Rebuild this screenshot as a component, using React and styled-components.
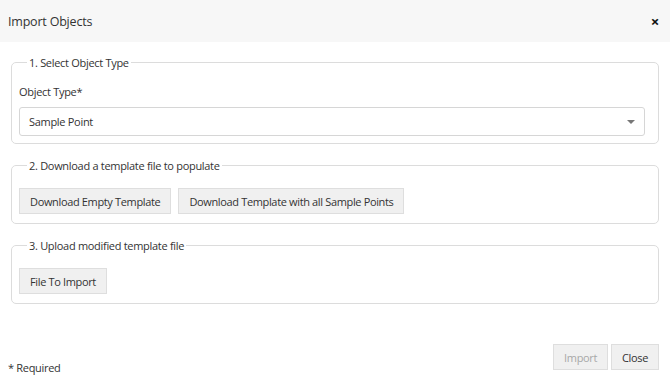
import React from 'react';
import styled, { createGlobalStyle } from 'styled-components';

const GlobalStyle = createGlobalStyle`
  html, body {
    margin: 0;
    padding: 0;
    background: #fff;
  }
  body {
    font-family: "Open Sans", "Liberation Sans", sans-serif;
    font-size: 11px;
    letter-spacing: -0.3px;
    color: #333;
  }
`

const Modal = styled.div`
  width: 670px;
  height: 385px;
  display: flex;
  flex-direction: column;
  background: #fff;
`

const Header = styled.div`
  height: 42px;
  background: #f7f7f7;
  display: flex;
  align-items: center;
  justify-content: space-between;
  padding: 0 11px 0 8px;
`

const Title = styled.div`
  font-size: 12.5px;
  letter-spacing: -0.2px;
  color: #333;
`

const CloseX = styled.div`
  font-size: 15px;
  font-weight: 700;
  color: #111;
  line-height: 1;
`

const Body = styled.div`
  padding: 13px 11px 0 11px;
  display: flex;
  flex-direction: column;
  gap: 14px;
  flex: 1;
`

const Section = styled.fieldset`
  margin: 0;
  border: 1px solid #dcdcdc;
  border-radius: 5px;
  padding: 6px 13px 7px 7px;
  min-width: 0;
`

const Legend = styled.legend`
  padding: 0 2px;
  margin-left: 8px;
  color: #333;
`

const Label = styled.div`
  margin: 8px 0 8px;
  color: #333;
`

const Select = styled.div`
  height: 27px;
  border: 1px solid #d6d6d6;
  border-radius: 3px;
  display: flex;
  align-items: center;
  justify-content: space-between;
  padding: 0 9px 0 9px;
`

const Caret = styled.div`
  width: 0;
  height: 0;
  border-left: 4px solid transparent;
  border-right: 4px solid transparent;
  border-top: 4px solid #777;
`

const ButtonRow = styled.div`
  display: flex;
  gap: 7px;
  padding: 9px 0 2px;
`

const Button = styled.button`
  font-family: inherit;
  font-size: 11px;
  letter-spacing: -0.35px;
  height: 26px;
  padding: 0 10px;
  background: #f0f0f0;
  border: 1px solid #dedede;
  border-radius: 0;
  color: ${p => (p.disabled ? '#a8a8a8' : '#333')};
  cursor: pointer;
`

const Footer = styled.div`
  display: flex;
  justify-content: space-between;
  align-items: flex-end;
  padding: 0 11px 10px 8px;
`

const Required = styled.div`
  color: #333;
`

const FooterButtons = styled.div`
  display: flex;
  gap: 3px;
  margin-bottom: 5px;
`

export default function App() {
  return (
    <>
      <GlobalStyle />
      <Modal>
        <Header>
          <Title>Import Objects</Title>
          <CloseX>×</CloseX>
        </Header>
        <Body>
          <Section>
            <Legend>1. Select Object Type</Legend>
            <Label>Object Type*</Label>
            <Select>
              <span>Sample Point</span>
              <Caret />
            </Select>
          </Section>
          <Section>
            <Legend>2. Download a template file to populate</Legend>
            <ButtonRow>
              <Button>Download Empty Template</Button>
              <Button>Download Template with all Sample Points</Button>
            </ButtonRow>
          </Section>
          <Section>
            <Legend>3. Upload modified template file</Legend>
            <ButtonRow>
              <Button>File To Import</Button>
            </ButtonRow>
          </Section>
        </Body>
        <Footer>
          <Required>* Required</Required>
          <FooterButtons>
            <Button disabled>Import</Button>
            <Button>Close</Button>
          </FooterButtons>
        </Footer>
      </Modal>
    </>
  );
}
